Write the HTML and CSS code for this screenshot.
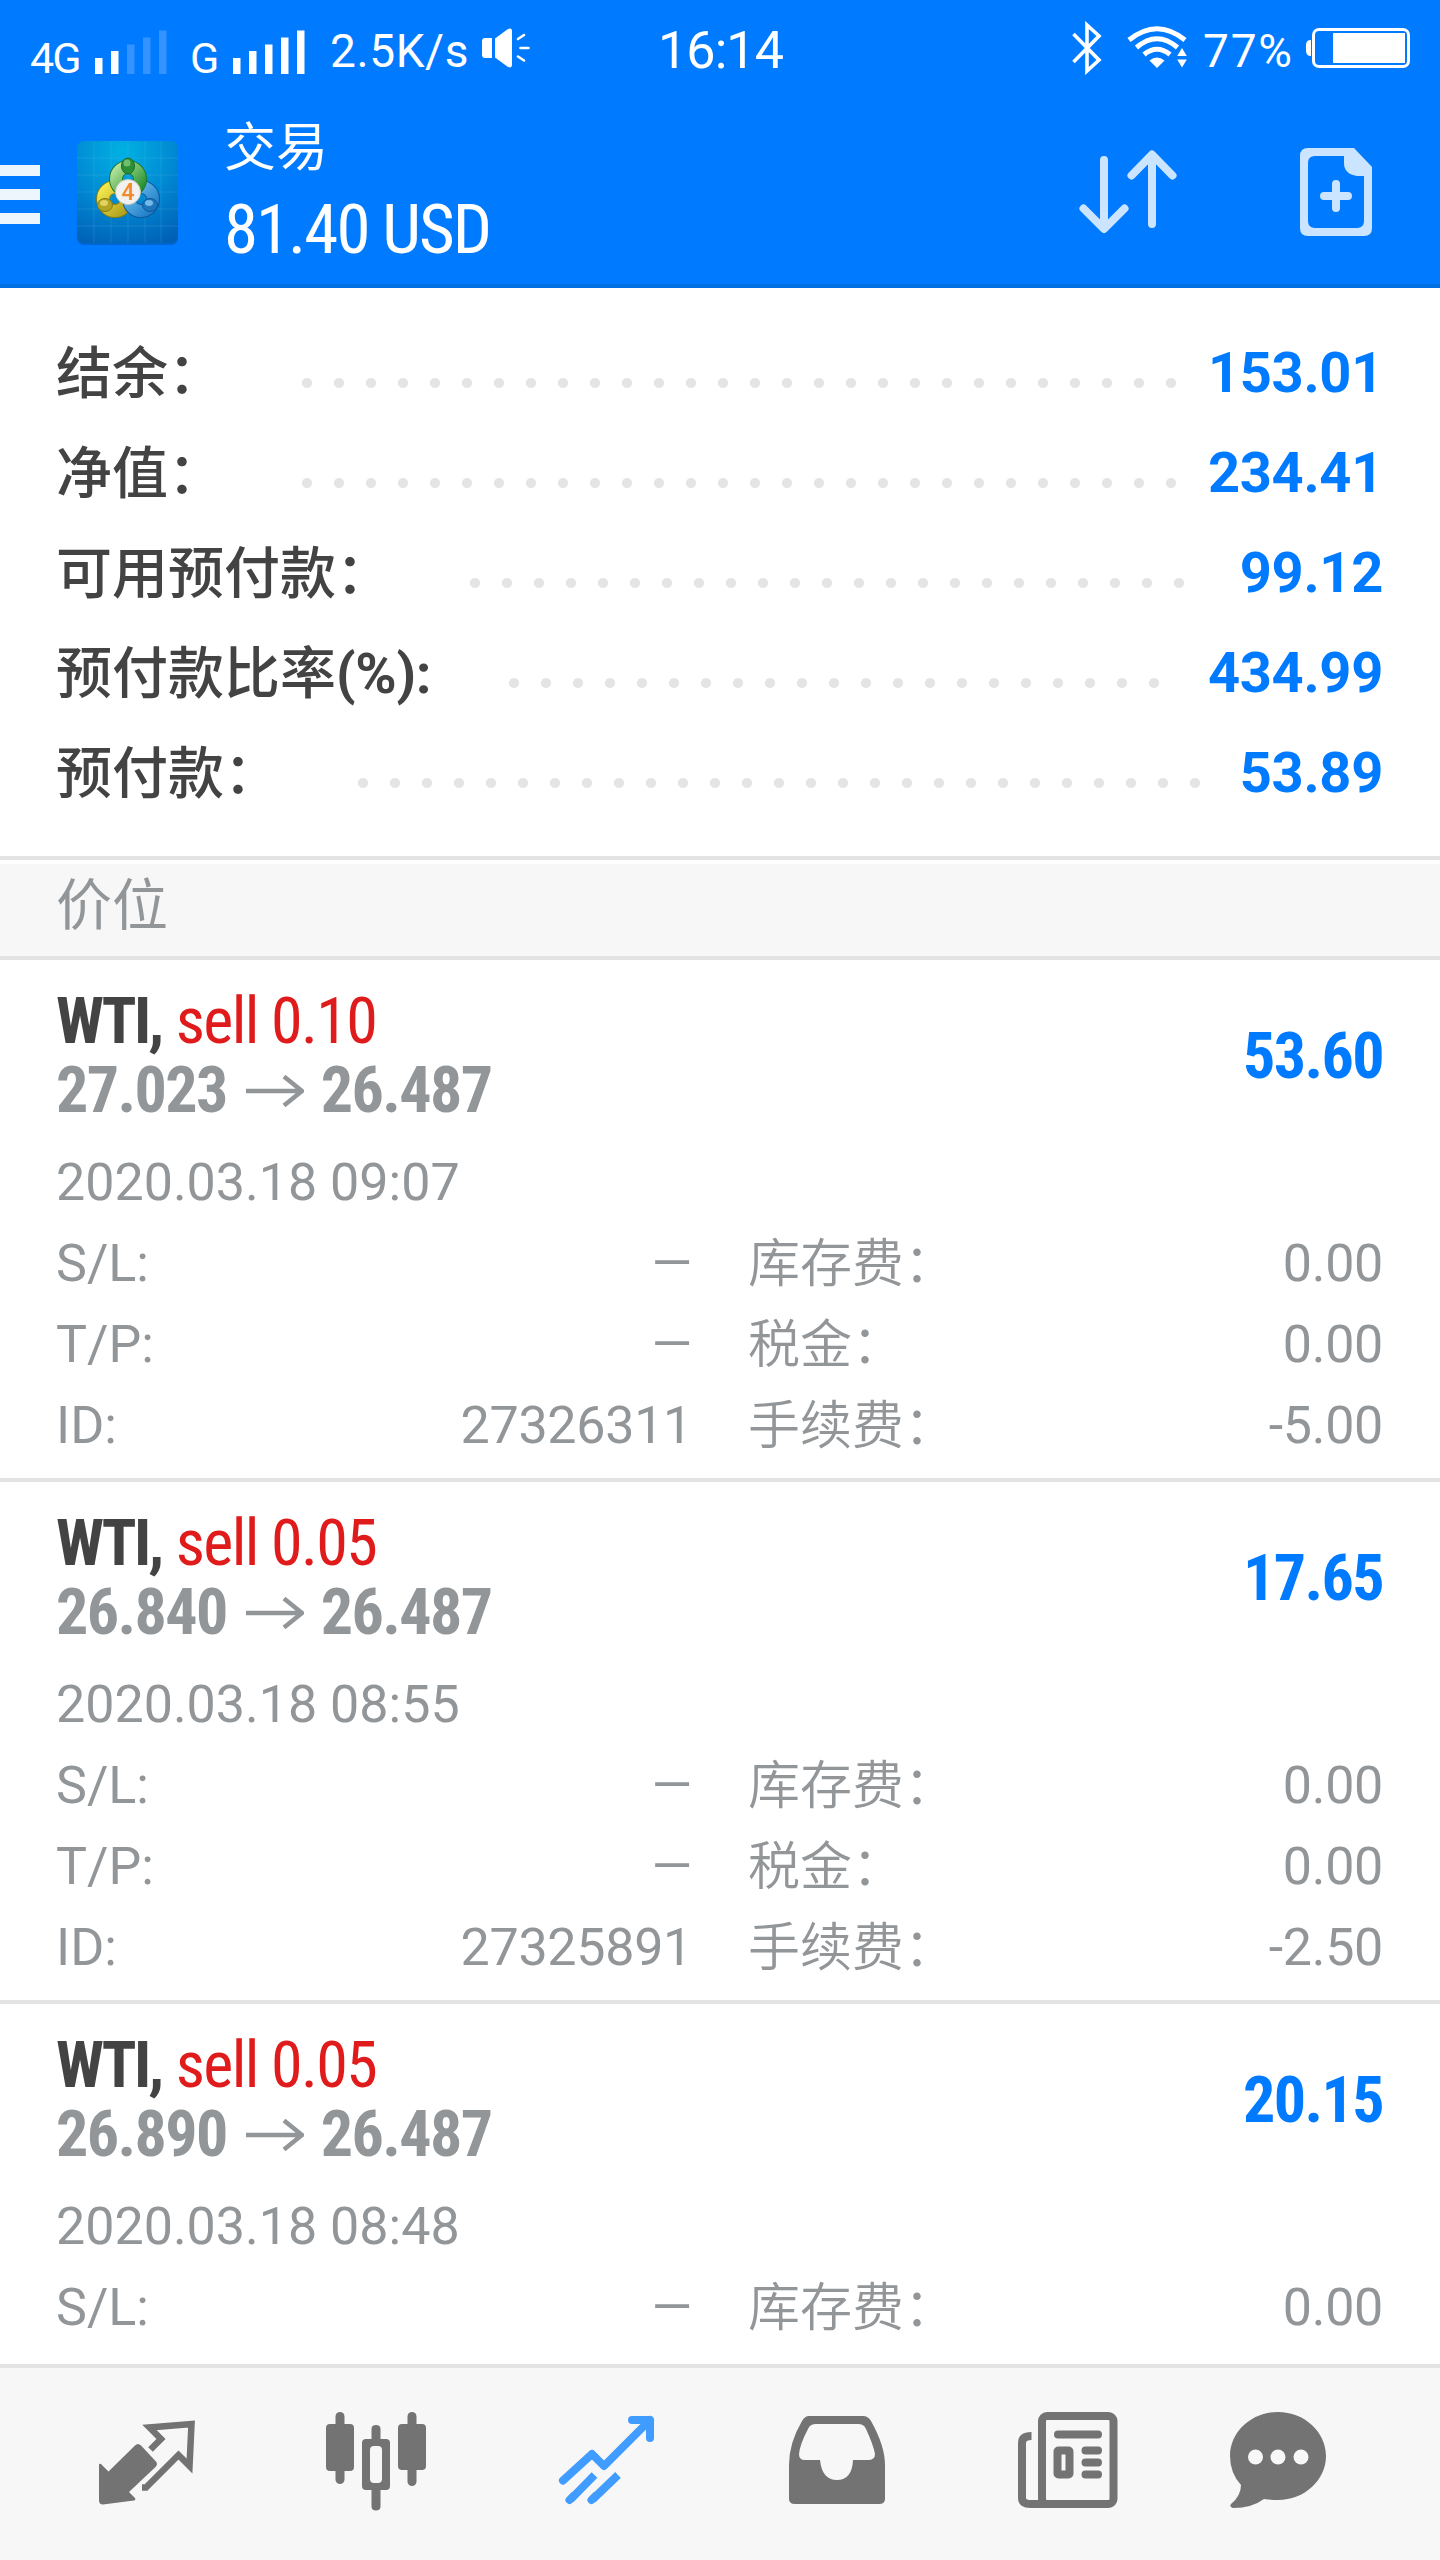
FILE: index.html
```html
<!DOCTYPE html>
<html lang="zh-CN">
<head>
<meta charset="utf-8">
<title>交易</title>
<link rel="stylesheet" href="styles.css">
</head>
<body>
<div class="screen">
  <header class="top">
    <div class="status">
      <span class="net net-a">4G</span>
      <svg class="bars bars-a" viewBox="0 0 72 44" width="72" height="44" fill="#fff"><path d="M0 28h7.500v16H0zM16 21h7.500v23H16z"/><path opacity=".2" d="M32 14.500h7.500V44H32zM48 7.500h7.500V44H48zM64 .5h7.500V44H64z"/></svg>
      <span class="net net-b">G</span>
      <svg class="bars bars-b" viewBox="0 0 72 44" width="72" height="44" fill="#fff"><path d="M0 28h7.500v16H0zM16 21h7.500v23H16zM32 14.500h7.500V44H32zM48 7.500h7.500V44H48zM64 .5h7.500V44H64z"/></svg>
      <span class="speed">2.5K/s</span>
      <svg class="speaker" viewBox="0 0 48 40" width="48" height="40"><path fill="#fff" d="M3 10h7v20H3q-3 0-3-3V13q0-3 3-3zM13 10.500L26 1q4-1.500 4 2v34q0 3.500-4 2L13 29.500z"/><path stroke="#fff" stroke-width="2.600" stroke-linecap="round" d="M36 11l6-4M38.500 20h8M36 28.500l6 4"/></svg>
      <span class="clock">16:14</span>
      <svg class="bt" viewBox="0 0 30 54" width="30" height="54" fill="none" stroke="#fff" stroke-width="3.600"><path d="M1.500 13L27 39 15 50V4l12 11L1.500 41"/></svg>
      <svg class="wifi" viewBox="0 0 62 44" width="62" height="44"><g fill="none" stroke="#fff" stroke-width="5"><path d="M2 14Q30-8.500 58 14"/><path d="M9.500 21.500Q30 4 50.500 21.500"/><path d="M17 28.500Q30 18 43 28.500"/></g><path fill="#fff" d="M22.500 34.500Q30 28.500 37.500 34.500L30 42zM55 22l4.800 8H50.200zM55 41.500l4.800-8H50.200z"/></svg>
      <span class="pct">77%</span>
      <svg class="battery" viewBox="0 0 104 40" width="104" height="40"><path fill="#fff" d="M5 12v16q-5 0-5-5v-6q0-5 5-5z"/><rect x="7.500" y="1.500" width="95" height="37" rx="5.500" fill="none" stroke="#fff" stroke-width="3"/><path fill="#fff" d="M27 5h72v30H27z"/></svg>
    </div>
    <div class="appbar">
      <svg class="menu" viewBox="0 0 40 60" width="40" height="60" fill="#eef6fd"><path d="M0 0h40v11H0zM0 24h40v11H0zM0 48h40v11H0z"/></svg>
      <svg class="logo" viewBox="0 0 108 108" width="108" height="108">
        <defs>
          <radialGradient id="bg" cx=".45" cy=".1" r="1"><stop offset="0" stop-color="#00b1e3"/><stop offset=".5" stop-color="#008ad3"/><stop offset="1" stop-color="#005fb5"/></radialGradient>
          <linearGradient id="gr" x1="0" y1="0" x2="1" y2="1"><stop offset="0" stop-color="#b4e39c"/><stop offset="1" stop-color="#218f2c"/></linearGradient>
          <linearGradient id="ye" x1="0" y1="0" x2="1" y2="1"><stop offset="0" stop-color="#f4e94f"/><stop offset="1" stop-color="#b0a01c"/></linearGradient>
          <linearGradient id="bl" x1="0" y1="0" x2="1" y2="1"><stop offset="0" stop-color="#6ec0ee"/><stop offset="1" stop-color="#1f7cc6"/></linearGradient>
        </defs>
        <rect x="4" y="5" width="101" height="102" rx="7" fill="#0050a0" opacity=".5"/>
        <rect x="4" y="3" width="101" height="102" rx="7" fill="url(#bg)"/>
        <path stroke="#7fd0f0" stroke-opacity=".16" d="M21 3v102M38 3v102M55 3v102M72 3v102M88 3v102M4 20h101M4 37h101M4 54h101M4 71h101M4 88h101"/>
        <circle cx="42" cy="61" r="12" fill="none" stroke="#887d12" stroke-width="14"/>
        <circle cx="42" cy="61" r="12" fill="none" stroke="url(#ye)" stroke-width="12"/>
        <circle cx="68" cy="61" r="12" fill="none" stroke="#0b579b" stroke-width="14"/>
        <circle cx="68" cy="61" r="12" fill="none" stroke="url(#bl)" stroke-width="12"/>
        <circle cx="55" cy="41" r="12" fill="none" stroke="#23762b" stroke-width="14"/>
        <circle cx="55" cy="41" r="12" fill="none" stroke="url(#gr)" stroke-width="12"/>
        <ellipse cx="55" cy="28" rx="6.500" ry="8" fill="#2c8f38" stroke="#1b6b26"/>
        <ellipse cx="54" cy="25" rx="3.500" ry="3.500" fill="#8fd080" opacity=".7"/>
        <ellipse cx="32" cy="67" rx="7.500" ry="6.500" fill="#b3a423" stroke="#85790f"/>
        <ellipse cx="31" cy="65" rx="4" ry="3" fill="#eadf70" opacity=".8"/>
        <ellipse cx="77" cy="67" rx="7.500" ry="6.500" fill="#1d75bc" stroke="#0b579b"/>
        <ellipse cx="76" cy="65" rx="4" ry="3" fill="#8accf0" opacity=".8"/>
        <circle cx="55" cy="54" r="12.500" fill="#f3f1ef" stroke="#c9cdbb"/>
        <text class="logo-num" x="55" y="62" text-anchor="middle">4</text>
      </svg>
      <div class="title">
        <div class="title-name">交易</div>
        <div class="title-sum cond">81.40 USD</div>
      </div>
      <svg class="sort" viewBox="0 0 100 88" width="100" height="88" fill="none" stroke="#cbe4ff" stroke-width="8" stroke-linecap="round" stroke-linejoin="round"><path d="M26 13v66M5.500 61.500L26 82l20.500-20.500M74 77V9M53.500 28.500L74 7.500l20.500 21"/></svg>
      <svg class="newdoc" viewBox="0 0 72 88" width="72" height="88"><path fill="#cbe4ff" fill-rule="evenodd" d="M8 0h46l18 19v61q0 8-8 8H8q-8 0-8-8V8q0-8 8-8zm7 8q-7 0-7 7v58q0 7 7 7h42q7 0 7-7V28H57Q44 26 44 15V8z"/><path stroke="#cbe4ff" stroke-width="8" stroke-linecap="round" d="M36 36v24M24 48h24"/></svg>
    </div>
  </header>

  <section class="summary">
    <div class="sum-row"><span class="sum-label">结余：</span><i class="leader n28"></i><b class="sum-value">153.01</b></div>
    <div class="sum-row"><span class="sum-label">净值：</span><i class="leader n28"></i><b class="sum-value">234.41</b></div>
    <div class="sum-row"><span class="sum-label">可用预付款：</span><i class="leader n23"></i><b class="sum-value">99.12</b></div>
    <div class="sum-row"><span class="sum-label">预付款比率<span class="ratio">(%):</span></span><i class="leader n21"></i><b class="sum-value">434.99</b></div>
    <div class="sum-row"><span class="sum-label">预付款：</span><i class="leader n27"></i><b class="sum-value">53.89</b></div>
  </section>

  <h2 class="section">价位</h2>

  <main class="list">
    <article class="pos">
      <div class="head">
        <div>
          <div class="line cond"><b class="sym">WTI,</b> <span class="sell">sell 0.10</span></div>
          <div class="line price cond"><b>27.023</b><svg class="arrow" viewBox="0 0 58 32" width="58" height="32"><path d="M0 16h55M38 1.500L56 16 38 30.500"/></svg><b>26.487</b></div>
        </div>
        <b class="profit cond">53.60</b>
      </div>
      <div class="date">2020.03.18 09:07</div>
      <div class="grid">
        <span>S/L:</span><span class="dash">—</span><span class="fee">库存费：</span><span class="num">0.00</span>
        <span>T/P:</span><span class="dash">—</span><span class="fee">税金：</span><span class="num">0.00</span>
        <span>ID:</span><span class="num">27326311</span><span class="fee">手续费：</span><span class="num">-5.00</span>
      </div>
    </article>
    <article class="pos">
      <div class="head">
        <div>
          <div class="line cond"><b class="sym">WTI,</b> <span class="sell">sell 0.05</span></div>
          <div class="line price cond"><b>26.840</b><svg class="arrow" viewBox="0 0 58 32" width="58" height="32"><path d="M0 16h55M38 1.500L56 16 38 30.500"/></svg><b>26.487</b></div>
        </div>
        <b class="profit cond">17.65</b>
      </div>
      <div class="date">2020.03.18 08:55</div>
      <div class="grid">
        <span>S/L:</span><span class="dash">—</span><span class="fee">库存费：</span><span class="num">0.00</span>
        <span>T/P:</span><span class="dash">—</span><span class="fee">税金：</span><span class="num">0.00</span>
        <span>ID:</span><span class="num">27325891</span><span class="fee">手续费：</span><span class="num">-2.50</span>
      </div>
    </article>
    <article class="pos">
      <div class="head">
        <div>
          <div class="line cond"><b class="sym">WTI,</b> <span class="sell">sell 0.05</span></div>
          <div class="line price cond"><b>26.890</b><svg class="arrow" viewBox="0 0 58 32" width="58" height="32"><path d="M0 16h55M38 1.500L56 16 38 30.500"/></svg><b>26.487</b></div>
        </div>
        <b class="profit cond">20.15</b>
      </div>
      <div class="date">2020.03.18 08:48</div>
      <div class="grid">
        <span>S/L:</span><span class="dash">—</span><span class="fee">库存费：</span><span class="num">0.00</span>
      </div>
    </article>
  </main>

  <nav class="tabs">
    <svg viewBox="0 0 120 120" width="120" height="120"><path fill="#737373" d="M23 59q0-2 2-1l7.500 7.500L59 39.500q3-3 6 0L79.500 55q3 3 0 6L53 86l6 6q1 2-1 2.500L27 98.500q-4 0-4-4z"/><path fill="none" stroke="#737373" stroke-width="6.500" d="M74.500 43.500L85 33 73.500 21.500l42-3.500-2 42L102.500 49 70 81.500h-4"/></svg>
    <svg viewBox="0 0 120 120" width="120" height="120" fill="#737373"><rect x="10" y="18" width="28" height="47" rx="4"/><rect x="19.500" y="6" width="9" height="72" rx="4.500"/><rect x="82" y="18" width="28" height="46" rx="4"/><rect x="91.500" y="6" width="9" height="74" rx="4.500"/><path d="M55.500 33V23q0-4 4.500-4t4.500 4v10H70q4 0 4 4v43q0 4-4 4h-5.500v16.500q0 4-4.500 4t-4.500-4V84H50q-4 0-4-4V37q0-4 4-4z"/><rect x="54" y="40" width="12" height="37" rx="4" fill="#f7f7f7"/></svg>
    <svg viewBox="0 0 120 120" width="120" height="120" fill="none" stroke="#409cff" stroke-width="8"><path stroke-linecap="round" stroke-linejoin="round" d="M21 74.500L50 48l12 12 46-46M90 14h18v18"/><path d="M28.500 93.500L52.500 69M50.500 93.500L76 69"/><path stroke-linecap="round" d="M27.500 94l4-4M49.500 94l4-4"/></svg>
    <svg viewBox="0 0 120 120" width="120" height="120"><path fill="#737373" fill-rule="evenodd" d="M32 10h54q5 0 8 5 14 25 14 44v34q0 5-6 5H18q-6 0-6-5V59q0-22 13-44 3-5 7-5zm7 8q-6 0-8 5-8 15-9 25 0 6 6 6h15q2 20 17 20t16-20h15q7 0 7-6-2-10-9-25-2-5-8-5z"/></svg>
    <svg viewBox="0 0 120 120" width="120" height="120" fill="none" stroke="#737373" stroke-width="8"><rect x="34" y="10" width="71.500" height="88" rx="5"/><path d="M23.500 30q-9.500 0-9.500 7v55q0 6 9 6h15"/><path stroke-linecap="round" d="M50 28.500h40M77.500 44.500h12.500M77.500 56.500h12.500M77.500 68.500h12.500"/><rect x="49.500" y="44.500" width="12" height="24" rx="1"/></svg>
    <svg viewBox="0 0 120 120" width="120" height="120"><path fill="#737373" d="M60 6c26.500 0 48 20 48 44S86.500 94 60 94q-8 0-14-1-12 9-31 9-4-1-2-4 10-8 10-19Q12 67 12 50C12 26 33.500 6 60 6z"/><g fill="#f7f7f7"><circle cx="37.500" cy="51" r="7.500"/><circle cx="60" cy="51" r="7.500"/><circle cx="83" cy="51" r="7.500"/></g></svg>
  </nav>
</div>
</body>
</html>
```

FILE: styles.css
```css
* { box-sizing: border-box; }

body {
  margin: 0;
  font-family: Roboto, "Noto Sans CJK SC", sans-serif;
  background: #fff;
}

svg { display: block; flex: none; }

.screen {
  display: flex;
  flex-direction: column;
  width: 1440px;
  height: 2560px;
  overflow: hidden;
}

.cond {
  font-family: "Roboto Condensed", Roboto, "Noto Sans CJK SC", sans-serif;
  font-stretch: 75%;
  letter-spacing: -1.6px;
  white-space: nowrap;
}

/* header */
.top {
  flex: none;
  height: 288px;
  background: #007aff;
  border-bottom: 4px solid #006fe0;
  color: #fff;
}

.status {
  display: flex;
  height: 100px;
}

.status span { flex: none; white-space: nowrap; }

.net { font-size: 43px; line-height: 50px; margin-top: 33px; letter-spacing: -2px; }
.net-a { width: 65px; margin-left: 30px; }
.net-b { width: 43px; margin-left: 23px; }
.bars { margin-top: 30px; }
.speed { width: 152px; margin: 23px 0 0 25px; font-size: 46px; line-height: 56px; letter-spacing: .6px; }
.speaker { margin-top: 28px; }
.clock { width: 414px; margin: 20px 0 0 128px; font-size: 52px; line-height: 62px; letter-spacing: -.9px; }
.bt { margin-top: 21px; }
.wifi { margin: 26px 0 0 25px; }
.pct { width: 103px; margin: 23px 0 0 14px; font-size: 46px; line-height: 56px; letter-spacing: 1.8px; }
.battery { margin-top: 28px; }

.appbar {
  display: flex;
  height: 184px;
}

.menu { margin-top: 65px; }
.logo { margin: 38px 0 0 33px; }
.logo-num { font-family: Roboto, sans-serif; font-size: 23px; font-weight: 500; fill: #f08a2c; }
.title { width: 854px; margin: 14px 0 0 43px; }
.title-name { font-size: 52px; line-height: 70px; font-weight: 400; }
.title-sum { font-size: 69px; line-height: 82px; margin-top: 5px; letter-spacing: -2px; }
.sort { margin-top: 47px; }
.newdoc { margin: 48px 0 0 122px; }

/* account summary */
.summary {
  flex: none;
  height: 572px;
  padding: 35px 57px 0 56px;
  border-bottom: 4px solid #e3e3e3;
}

.sum-row {
  display: flex;
  height: 100px;
  line-height: 100px;
  font-size: 56px;
}

.sum-label { padding-top: 1px; color: #434343; font-weight: 500; white-space: nowrap; }
.ratio { font-weight: 700; letter-spacing: -.3px; }

.leader {
  width: calc(var(--n) * 32px);
  margin-left: 67px;
  background: radial-gradient(circle at 16px 60px, #e4e4e4 4.6px, transparent 5.400px) repeat-x;
  background-size: 32px 100px;
}

.n21 { --n: 21; }
.n23 { --n: 23; }
.n27 { --n: 27; }
.n28 { --n: 28; }

.sum-value { margin-left: auto; color: #007aff; font-weight: 700; letter-spacing: -.3px; }

.section {
  flex: none;
  height: 100px;
  margin: 0;
  padding-left: 56px;
  border-top: 4px solid #fff;
  border-bottom: 4px solid #e3e3e3;
  background: #f7f7f7;
  color: #929699;
  font-size: 56px;
  font-weight: 400;
  line-height: 84px;
}

/* open positions */
.list {
  flex: 1;
  min-height: 0;
  overflow: hidden;
}

.pos {
  height: 522px;
  padding: 27px 57px 0 56px;
  border-bottom: 4px solid #e3e3e3;
  color: #929699;
}

.head {
  display: flex;
  justify-content: space-between;
  height: 146px;
}

.line {
  display: flex;
  gap: 14px;
  font-size: 64px;
  line-height: 69px;
}

.price { gap: 18px; }
.sym { color: #434343; letter-spacing: -2.6px; }
.sell { color: #df1b1b; }
.arrow { margin: 19px -1px 0 1px; fill: none; stroke: #929699; stroke-width: 4.500px; }
.profit { color: #007aff; font-size: 64px; line-height: 69px; margin-top: 35px; }

.date { font-size: 52px; line-height: 81px; margin-top: 9px; }

.grid {
  display: grid;
  grid-template-columns: 200px 436px 300px 1fr;
  grid-auto-rows: 81px;
  font-size: 52px;
  line-height: 81px;
}

.num, .dash { text-align: right; }
.num { letter-spacing: -.3px; }
.fee { padding: 1px 0 0 56px; font-weight: 350; }

/* tab bar */
.tabs {
  flex: none;
  display: grid;
  grid-template-columns: 240px 226px 235px 231px 210px 1fr;
  height: 196px;
  padding: 38px 0 0 76px;
  border-top: 4px solid #e3e3e3;
  background: #f7f7f7;
}
```
